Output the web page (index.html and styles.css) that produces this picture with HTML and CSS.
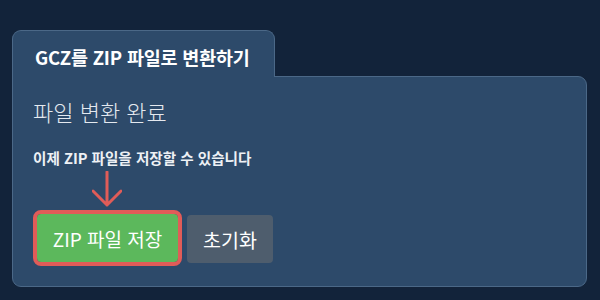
FILE: index.html
```html
<!DOCTYPE html>
<html lang="ko">
<head>
    <meta charset="UTF-8">
    <title>GCZ를 ZIP 파일로 변환하기</title>
    <link rel="stylesheet" href="styles.css">
</head>
<body>
    <div class="converter">
        <div class="tab">GCZ를 ZIP 파일로 변환하기</div>
        <div class="panel">
            <h1>파일 변환 완료</h1>
            <p class="message">이제 ZIP 파일을 저장할 수 있습니다</p>

            <div class="hint">
                <svg width="30" height="37" viewBox="0 0 30 37">
                    <path d="M15 1 V34 M1 20 L15 34 L29 20" fill="none" stroke="#e05c58" stroke-width="3" stroke-linecap="round" stroke-linejoin="round"/>
                </svg>
            </div>

            <div class="actions">
                <button class="btn btn-save">ZIP 파일 저장</button>
                <button class="btn btn-reset">초기화</button>
            </div>
        </div>
    </div>
</body>
</html>
```

FILE: styles.css
```css
* {
    margin: 0;
    padding: 0;
    box-sizing: border-box;
}

body {
    font-family: "Noto Sans CJK KR", "Noto Sans", sans-serif;
    background: #12233a;
    color: #fff;
    padding: 30px 13px 0 12px;
}

.converter {
    width: 575px;
}

.tab {
    width: 263px;
    height: 47px;
    margin-bottom: -1px;
    position: relative;
    z-index: 1;
    padding: 12px 0 0 22px;
    background: #2d4a6a;
    border: 1px solid #4b6887;
    border-bottom: none;
    border-radius: 9px 9px 0 0;
    font-size: 18.5px;
    font-weight: 700;
    line-height: 28px;
    letter-spacing: -0.2px;
}

.panel {
    height: 211px;
    background: #2d4a6a;
    border: 1px solid #4b6887;
    border-radius: 0 9px 9px 9px;
    padding: 19px 20px 0 20px;
}

h1 {
    font-size: 22px;
    font-weight: 300;
    line-height: 30px;
    color: #e4e9ef;
}

.message {
    margin-top: 22px;
    font-size: 14.6px;
    font-weight: 700;
    line-height: 20px;
    color: #eef1f5;
}

.hint {
    height: 46px;
    padding: 3px 0 0 59px;
}

.hint svg {
    display: block;
}

.actions {
    display: flex;
    align-items: center;
    gap: 9px;
    padding-left: 4px;
}

.btn {
    height: 48px;
    border: none;
    border-radius: 4px;
    font-family: inherit;
    font-size: 19px;
    font-weight: 400;
    color: #fff;
    cursor: pointer;
}

.btn-save {
    width: 141px;
    background: #5cb85c;
    outline: 4px solid #e05c58;
    margin-top: -1px;
}

.btn-reset {
    width: 86px;
    background: #4e5d6d;
    margin-top: 1px;
    font-size: 19.5px;
}
```
